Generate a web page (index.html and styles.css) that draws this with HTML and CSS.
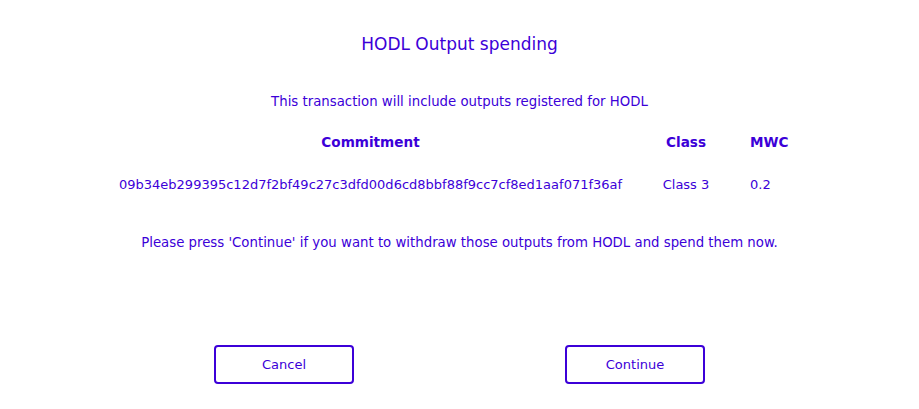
FILE: index.html
```html
<!DOCTYPE html>
<html>
<head>
<meta charset="utf-8">
<link rel="stylesheet" href="styles.css">
</head>
<body>
<div class="dialog">
  <h1 class="title">HODL Output spending</h1>
  <p class="intro">This transaction will include outputs registered for HODL</p>
  <div class="table">
    <div class="th c-commit">Commitment</div>
    <div class="th c-class">Class</div>
    <div class="th c-mwc">MWC</div>
    <div class="td c-commit">09b34eb299395c12d7f2bf49c27c3dfd00d6cd8bbf88f9cc7cf8ed1aaf071f36af</div>
    <div class="td c-class">Class 3</div>
    <div class="td c-mwc">0.2</div>
  </div>
  <p class="note">Please press 'Continue' if you want to withdraw those outputs from HODL and spend them now.</p>
  <div class="buttons">
    <button class="btn">Cancel</button>
    <button class="btn">Continue</button>
  </div>
</div>
</body>
</html>
```
FILE: styles.css
```css
* { box-sizing: border-box; }
html, body { margin: 0; padding: 0; background: #fff; }
body {
  width: 919px;
  height: 409px;
  font-family: "DejaVu Sans", sans-serif;
  color: #3c00d8;
  font-size: 13px;
}
.dialog {
  display: flex;
  flex-direction: column;
  align-items: center;
  padding-top: 33px;
}
.title {
  margin: 0;
  font-size: 17px;
  font-weight: normal;
  line-height: 22px;
}
.intro {
  margin: 39px 0 0;
  font-size: 13.3px;
  line-height: 16px;
}
.table {
  display: grid;
  grid-template-columns: 503px 50px 40px;
  column-gap: 39px;
  row-gap: 27px;
  margin-top: 24px;
  transform: translateX(-5px);
}
.th { font-weight: bold; font-size: 13.6px; line-height: 16px; }
.td { line-height: 16px; white-space: nowrap; }
.c-commit { text-align: center; }
.c-class { text-align: center; }
.c-mwc { text-align: left; }
.note {
  margin: 42px 0 0;
  font-size: 13.3px;
  line-height: 16px;
}
.buttons {
  display: flex;
  gap: 211px;
  margin-top: 94px;
}
.btn {
  width: 140px;
  height: 39px;
  border: 2px solid #3c00d8;
  border-radius: 4px;
  background: #fff;
  color: #3c00d8;
  font-family: "DejaVu Sans", sans-serif;
  font-size: 13px;
  padding: 0;
}
```
